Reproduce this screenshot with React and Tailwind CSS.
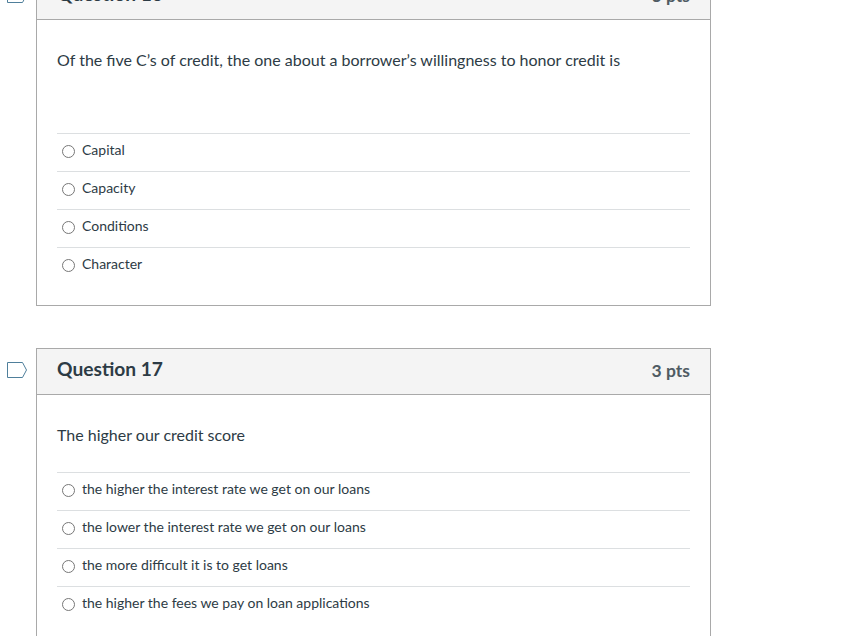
const questions = [
  {
    id: 16,
    pts: '3 pts',
    text: 'Of the five C’s of credit, the one about a borrower’s willingness to honor credit is',
    bodyHeight: 'h-[113px]',
    answers: ['Capital', 'Capacity', 'Conditions', 'Character'],
  },
  {
    id: 17,
    pts: '3 pts',
    text: 'The higher our credit score',
    bodyHeight: 'h-[77px]',
    answers: [
      'the higher the interest rate we get on our loans',
      'the lower the interest rate we get on our loans',
      'the more difficult it is to get loans',
      'the higher the fees we pay on loan applications',
    ],
  },
];

const Flag = () => (
  <svg width="20" height="16" viewBox="0 0 20 16" fill="none" className="block">
    <path d="M0.5 0.5H15.5L19.5 8L15.5 15.5H0.5Z" stroke="#4f7f9b" strokeWidth="1" fill="#fff" />
  </svg>
);

const Question = ({ q }) => (
  <div className="flex">
    <div className="w-[36px] shrink-0 pl-[7px] pt-[14px]">
      <Flag />
    </div>
    <div className="w-[675px] border border-[#a9a9a9] bg-white">
      <div className="flex h-[46px] items-center justify-between border-b border-[#a9a9a9] bg-[#f4f4f4] px-5 text-[#2d3b45]">
        <h2 className="mb-[4px] text-[19.2px] font-bold">Question {q.id}</h2>
        <span className="text-[17.5px] font-bold text-[#4f5b63]">{q.pts}</span>
      </div>
      <div className="px-5 pb-5">
        <div className={`${q.bodyHeight} pt-[30px] text-[16px] leading-[20px] text-[#2d3b45]`}>{q.text}</div>
        {q.answers.map((a) => (
          <div key={a} className="flex h-[38px] items-center border-t border-[#dcdfe1] pb-[6px] pl-[5px] text-[14px] text-[#2d3b45]">
            <span className="mt-[3px] mr-[7px] size-[13px] rounded-full border border-[#777777] bg-white" />
            {a}
          </div>
        ))}
      </div>
    </div>
  </div>
);

export default function App() {
  return (
    <div className="h-[636px] overflow-hidden bg-white font-['Lato','Open_Sans',sans-serif]">
      <div className="-mt-[27px] flex flex-col gap-[42px]">
        {questions.map((q) => (
          <Question key={q.id} q={q} />
        ))}
      </div>
    </div>
  );
}
